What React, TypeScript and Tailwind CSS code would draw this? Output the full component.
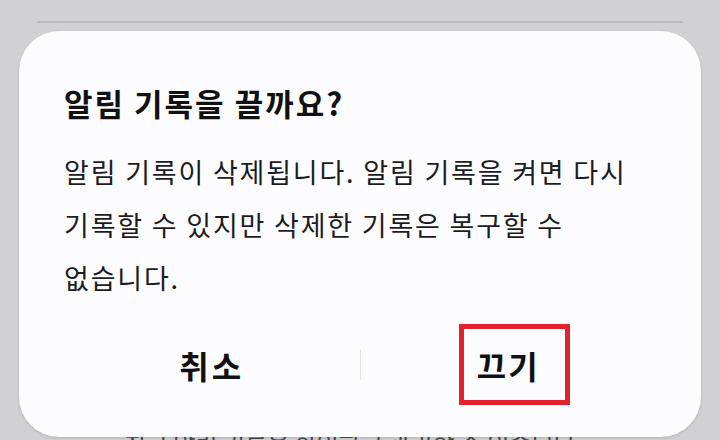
import React from "react";

export default function App() {
  return (
    <div
      className="relative w-[720px] h-[440px] overflow-hidden bg-[#d1d1d3]"
      style={{ fontFamily: '"Noto Sans CJK KR", "Noto Sans", sans-serif' }}
    >
      {/* background page */}
      <div className="pt-[21px] px-[37px]">
        <div className="h-[2px] bg-[#bcbcbe]" />
      </div>
      <div className="mt-[405px] pl-[124px] text-[24px] leading-[30px] text-[#4a4a4c] whitespace-nowrap">
        최근 알림 기록을 확인하고 관리할 수 있습니다
      </div>

      {/* dialog */}
      <div className="absolute left-[19px] top-[31px] w-[682px] h-[406px] rounded-[40px] bg-[#fcfcfe] shadow-[0_1px_3px_rgba(0,0,0,0.15)] px-[45px] pt-[53px] flex flex-col">
        <div className="text-[31px] leading-[37px] font-bold tracking-[2px] text-[#111111]">
          알림 기록을 끌까요?
        </div>
        <div className="mt-[24px] text-[27px] leading-[53px] tracking-[1.8px] text-[#1c1c1e]">
          알림 기록이 삭제됩니다. 알림 기록을 켜면 다시
          <br />
          기록할 수 있지만 삭제한 기록은 복구할 수
          <br />
          없습니다.
        </div>
        <div className="mt-[21px] h-[80px] flex items-center">
          <div className="flex-1 h-full flex items-center justify-center text-[32px] font-bold tracking-[3px] text-[#111111]">
            취소
          </div>
          <div className="w-px h-[30px] bg-[#e4e4e6]" />
          <div className="relative flex-1 h-full flex items-center justify-center text-[32px] font-bold tracking-[2px] text-[#111111]">
            끄기
            <div className="absolute left-[98px] top-[-1px] w-[111px] h-[81px] border-[5px] border-[#e3212c]" />
          </div>
        </div>
      </div>
    </div>
  );
}
